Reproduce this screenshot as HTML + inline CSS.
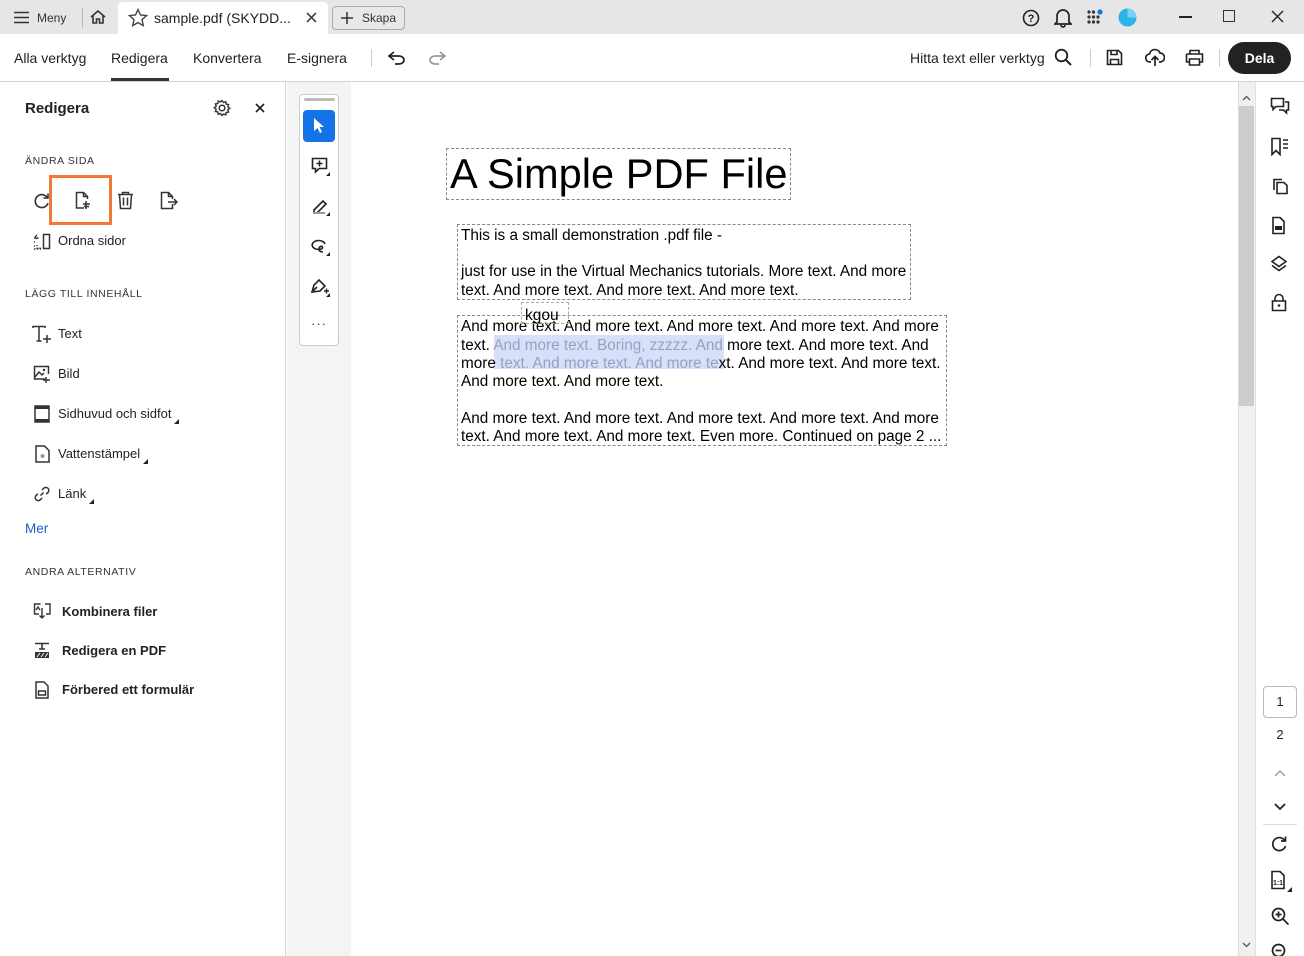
<!DOCTYPE html>
<html><head><meta charset="utf-8"><style>
*{box-sizing:border-box;margin:0;padding:0}
body{width:1304px;height:956px;overflow:hidden;font-family:"Liberation Sans",sans-serif;background:#fff;position:relative;color:#222}
.abs{position:absolute}
.tb{top:0;left:0;width:1304px;height:34px;background:#e6e6e6}
.sm{font-size:12px;color:#333}
.nav{top:34px;left:0;width:1304px;height:48px;border-bottom:1px solid #d0d0d0;background:#fff}
.nav span{position:absolute;top:16px;font-size:14px;color:#222}
.lp{top:82px;left:0;width:286px;height:874px;border-right:1px solid #d5d5d5;background:#fff}
.hd{font-size:10.5px;letter-spacing:.6px;color:#333;position:absolute;left:25px}
.it{position:absolute;left:58px;font-size:13px;color:#222}
.it2{position:absolute;left:62px;font-size:13px;font-weight:bold;color:#222}
.pdf{font-family:"Liberation Sans",Arial,sans-serif;color:#000}
.box{position:absolute;border:1px dashed #888}
.p{position:absolute;left:461px;font-size:15.3px;line-height:18px;white-space:nowrap}
.rr svg{position:absolute;left:1270px}
</style></head><body>
<div class="abs tb"></div>
<svg class="abs" style="left:14px;top:11px" width="16" height="13"><path d="M0 1.5h15M0 6.5h15M0 11.5h15" stroke="#333" stroke-width="1.6"/></svg>
<div class="abs sm" style="left:37px;top:11px">Meny</div>
<div class="abs" style="left:82px;top:8px;width:1px;height:20px;background:#bbb"></div>
<svg class="abs" style="left:89px;top:9px" width="18" height="16"><path d="M2 8L9 2l7 6M4 6.5V14h3.5v-4h3v4H14V6.5" fill="none" stroke="#333" stroke-width="1.6"/></svg>
<div class="abs" style="left:118px;top:2px;width:210px;height:32px;background:#fff;border-radius:4px 4px 0 0"></div>
<svg class="abs" style="left:128px;top:8px" width="20" height="19"><path d="M10 1.5l2.5 5.5 6 .6-4.5 4 1.3 6L10 14.6 4.7 17.6 6 11.6 1.5 7.6l6-.6z" fill="none" stroke="#444" stroke-width="1.4"/></svg>
<div class="abs" style="left:154px;top:10px;font-size:14px;color:#222">sample.pdf (SKYDD...</div>
<svg class="abs" style="left:306px;top:12px" width="11" height="11"><path d="M1 1l9 9M10 1l-9 9" stroke="#444" stroke-width="1.6"/></svg>
<div class="abs" style="left:332px;top:6px;width:73px;height:24px;border:1px solid #aaa;border-radius:4px;background:#e8e8e8"></div>
<svg class="abs" style="left:341px;top:12px" width="12" height="12"><path d="M6 0v12M0 6h12" stroke="#333" stroke-width="1.5"/></svg>
<div class="abs sm" style="left:362px;top:11px">Skapa</div>
<svg class="abs" style="left:1022px;top:9px" width="18" height="18"><circle cx="9" cy="9" r="7.5" fill="none" stroke="#222" stroke-width="1.6"/><text x="9" y="13" font-size="11" font-weight="bold" text-anchor="middle" font-family="Liberation Sans" fill="#222">?</text></svg>
<svg class="abs" style="left:1054px;top:8px" width="18" height="20"><path d="M3 14V8a6 6 0 0 1 12 0v6l2 2H1zM7 17a2 2 0 0 0 4 0" fill="none" stroke="#222" stroke-width="1.7"/></svg>
<svg class="abs" style="left:1087px;top:9px" width="18" height="16"><g fill="#333"><circle cx="2" cy="3" r="1.6"/><circle cx="6.5" cy="3" r="1.6"/><circle cx="2" cy="8" r="1.6"/><circle cx="6.5" cy="8" r="1.6"/><circle cx="11" cy="8" r="1.6"/><circle cx="2" cy="13" r="1.6"/><circle cx="6.5" cy="13" r="1.6"/><circle cx="11" cy="13" r="1.6"/></g><circle cx="13" cy="3" r="2.6" fill="#1473e6"/></svg>
<svg class="abs" style="left:1118px;top:8px" width="19" height="19"><circle cx="9.5" cy="9.5" r="9" fill="#2ab4e8"/><path d="M9.5 9.5V.5a9 9 0 0 1 9 9z" fill="#7ad3f3"/></svg>
<div class="abs" style="left:1179px;top:16px;width:13px;height:2px;background:#222"></div>
<div class="abs" style="left:1223px;top:10px;width:12px;height:12px;border:1.5px solid #333"></div>
<svg class="abs" style="left:1271px;top:10px" width="13" height="13"><path d="M1 1l11 11M12 1L1 12" stroke="#222" stroke-width="1.4"/></svg>
<div class="abs nav">
<span style="left:14px">Alla verktyg</span>
<span style="left:111px">Redigera</span>
<div class="abs" style="left:111px;top:44px;width:58px;height:3px;background:#333"></div>
<span style="left:193px">Konvertera</span>
<span style="left:287px">E-signera</span>
<div class="abs" style="left:371px;top:15px;width:1px;height:18px;background:#ccc"></div>
<svg class="abs" style="left:387px;top:16px" width="20" height="16"><path d="M7 2L2 6l5 4M2 6h10a5 4 0 0 1 0 8H8" fill="none" stroke="#222" stroke-width="1.7"/></svg>
<svg class="abs" style="left:427px;top:16px" width="20" height="16"><path d="M13 2l5 4-5 4M18 6H8a5 4 0 0 0 0 8h4" fill="none" stroke="#999" stroke-width="1.7"/></svg>
<span style="left:910px">Hitta text eller verktyg</span>
<svg class="abs" style="left:1054px;top:14px" width="18" height="18"><circle cx="7.5" cy="7.5" r="5.8" fill="none" stroke="#222" stroke-width="1.8"/><path d="M12 12l5 5" stroke="#222" stroke-width="2"/></svg>
<div class="abs" style="left:1090px;top:15px;width:1px;height:18px;background:#ccc"></div>
<svg class="abs" style="left:1106px;top:15px" width="17" height="17"><path d="M1.5 1.5h11l3 3v11h-14z M5 1.5v4h6v-4M4.5 15.5v-5h8v5" fill="none" stroke="#222" stroke-width="1.6"/></svg>
<svg class="abs" style="left:1145px;top:14px" width="20" height="19"><path d="M6 14H5a4 4 0 0 1-.5-8A5.5 5.5 0 0 1 15 5a4.5 4.5 0 0 1 0 9h-1M10 18V9M6.5 12L10 8.5l3.5 3.5" fill="none" stroke="#222" stroke-width="1.7"/></svg>
<svg class="abs" style="left:1185px;top:15px" width="19" height="17"><path d="M5 5V1.5h9V5M1.5 5h16v8h-3M4.5 13h-3V5M4.5 10h10v6h-10z" fill="none" stroke="#222" stroke-width="1.6"/></svg>
<div class="abs" style="left:1219px;top:15px;width:1px;height:18px;background:#ccc"></div>
<div class="abs" style="left:1228px;top:8px;width:63px;height:32px;border-radius:16px;background:#222;color:#fff;font-weight:bold;font-size:14px;text-align:center;line-height:32px">Dela</div>
</div>
<div class="abs lp">
<div class="abs" style="left:25px;top:18px;font-size:15px;font-weight:bold;color:#222">Redigera</div>
<svg class="abs" style="left:213px;top:17px" width="18" height="18"><circle cx="9" cy="9" r="2.8" fill="none" stroke="#333" stroke-width="1.5"/><path d="M9 1.5l1.5 2 2.3-.8.4 2.4 2.4.4-.8 2.3 2 1.5-2 1.5.8 2.3-2.4.4-.4 2.4-2.3-.8L9 16.5l-1.5-2-2.3.8-.4-2.4-2.4-.4.8-2.3-2-1.5 2-1.5-.8-2.3 2.4-.4.4-2.4 2.3.8z" fill="none" stroke="#333" stroke-width="1.4"/></svg>
<svg class="abs" style="left:255px;top:21px" width="10" height="10"><path d="M1 1l8 8M9 1L1 9" stroke="#222" stroke-width="1.7"/></svg>
<div class="hd" style="top:73px">ÄNDRA SIDA</div>
<svg class="abs" style="left:33px;top:110px" width="18" height="18"><path d="M14.5 6A6.5 6.5 0 1 0 15 11M15 1.5V6h-4.5" fill="none" stroke="#333" stroke-width="1.6"/></svg>
<div class="abs" style="left:49px;top:93px;width:63px;height:50px;border:3px solid #f0793a"></div>
<svg class="abs" style="left:75px;top:109px" width="18" height="19"><path d="M9 17H1.5V1.5h7l4 4V8M8.5 1.5v4h4" fill="none" stroke="#333" stroke-width="1.5"/><path d="M11 10v8M8 13h7M9 15.5h5" stroke="#333" stroke-width="1.5"/></svg>
<svg class="abs" style="left:117px;top:109px" width="17" height="19"><path d="M1 3.5h15M5.5 3.5V1.5h6v2M2.5 3.5l1 14h10l1-14M6.5 6.5v8M10.5 6.5v8" fill="none" stroke="#333" stroke-width="1.5"/></svg>
<svg class="abs" style="left:160px;top:109px" width="18" height="19"><path d="M12.5 13v4.5h-11V1.5h7l4 4V8M8.5 1.5v4h4M8 11h9M14 8l3 3-3 3" fill="none" stroke="#333" stroke-width="1.5"/></svg>
<svg class="abs" style="left:33px;top:151px" width="18" height="17"><path d="M10.5 1.5h6v14h-6z" fill="none" stroke="#333" stroke-width="1.5"/><path d="M1 5h6M1 9h1M1 13h1M1 16h7M4 16V12M7 16v-3" stroke="#333" stroke-width="1.5" stroke-dasharray="1.5 1.5"/><path d="M2 4l2-2M2 4l2 2" stroke="#333" stroke-width="1.3"/></svg>
<div class="it" style="top:151px">Ordna sidor</div>
<div class="hd" style="top:206px">LÄGG TILL INNEHÅLL</div>
<svg class="abs" style="left:32px;top:243px" width="20" height="20"><path d="M1 3V1.5h12V3M7 1.5V16M4.5 16h5M15 10v8M11 14h8" fill="none" stroke="#333" stroke-width="1.5"/></svg>
<div class="it" style="top:244px">Text</div>
<svg class="abs" style="left:33px;top:283px" width="20" height="18"><path d="M12 14H1.5V1.5h14V9M2 12l4-5 3 3 2-2M13 12v6M10 15h7" fill="none" stroke="#333" stroke-width="1.5"/><circle cx="11" cy="5" r="1.2" fill="#333"/></svg>
<div class="it" style="top:284px">Bild</div>
<svg class="abs" style="left:34px;top:323px" width="16" height="18"><rect x="1" y="1" width="14" height="16" fill="none" stroke="#333" stroke-width="1.5"/><path d="M1 1h14v3H1zM1 14h14v3H1z" fill="#333"/></svg>
<div class="it" style="top:324px">Sidhuvud och sidfot</div>
<svg class="abs" style="left:174px;top:337px" width="5" height="5"><path d="M5 0v5H0z" fill="#222"/></svg>
<svg class="abs" style="left:35px;top:363px" width="15" height="18"><path d="M1 1h8.5L14 5.5V17H1z" fill="none" stroke="#333" stroke-width="1.5"/><circle cx="7.5" cy="11" r="2" fill="#999"/></svg>
<div class="it" style="top:364px">Vattenstämpel</div>
<svg class="abs" style="left:143px;top:377px" width="5" height="5"><path d="M5 0v5H0z" fill="#222"/></svg>
<svg class="abs" style="left:33px;top:403px" width="18" height="18"><path d="M7.5 10.5l3-3M9 5l2-2a3 3 0 0 1 4.2 4.2l-2 2M9 13l-2 2A3 3 0 0 1 2.8 10.8l2-2" fill="none" stroke="#333" stroke-width="1.5"/></svg>
<div class="it" style="top:404px">Länk</div>
<svg class="abs" style="left:89px;top:417px" width="5" height="5"><path d="M5 0v5H0z" fill="#222"/></svg>
<div class="abs" style="left:25px;top:439px;font-size:13.5px;color:#1b5fc1">Mer</div>
<div class="hd" style="top:484px">ANDRA ALTERNATIV</div>
<svg class="abs" style="left:33px;top:520px" width="18" height="18"><path d="M6 12H1.5V2h6M12 2h5v10h-4M9 6v10M6.5 13.5L9 16l2.5-2.5M3 8l2-3 2 3" fill="none" stroke="#333" stroke-width="1.4"/></svg>
<div class="it2" style="top:522px">Kombinera filer</div>
<svg class="abs" style="left:34px;top:560px" width="16" height="17"><path d="M1 1.5h14M8 1.5V7M5 7h6" stroke="#333" stroke-width="1.6"/><rect x="1" y="10" width="14" height="6" fill="#333"/><path d="M3 15l3-4M7 15l3-4M11 15l3-4" stroke="#fff" stroke-width="1"/></svg>
<div class="it2" style="top:561px">Redigera en PDF</div>
<svg class="abs" style="left:35px;top:599px" width="14" height="18"><path d="M1 1h8l4 4v12H1zM3.5 10h7v4h-7z" fill="none" stroke="#333" stroke-width="1.5"/></svg>
<div class="it2" style="top:600px">Förbered ett formulär</div>
</div>
<div class="abs" style="left:287px;top:82px;width:64px;height:874px;background:#f4f4f4"></div>
<div class="abs" style="left:299px;top:94px;width:40px;height:252px;background:#fff;border:1px solid #ccc;border-radius:4px"></div>
<div class="abs" style="left:304px;top:98px;width:31px;height:3px;background:#bbb;border-radius:2px"></div>
<div class="abs" style="left:303px;top:110px;width:32px;height:32px;background:#1473e6;border-radius:4px"></div>
<svg class="abs" style="left:313px;top:117px" width="12" height="17"><path d="M1 1v13l3.5-3 2.5 5 2-1-2.5-5H11z" fill="#fff"/></svg>
<svg class="abs" style="left:311px;top:157px" width="20" height="20"><path d="M1.5 1.5h14v10H8l-3.5 3.5v-3.5h-3z" fill="none" stroke="#222" stroke-width="1.6"/><path d="M8.5 3.5v6M5.5 6.5h6" stroke="#222" stroke-width="1.5"/><path d="M19 15v4h-4z" fill="#222"/></svg>
<svg class="abs" style="left:311px;top:197px" width="20" height="20"><path d="M3 13l9-9 3 3-9 9H3z" fill="none" stroke="#222" stroke-width="1.6"/><path d="M2 16h12" stroke="#999" stroke-width="2"/><path d="M19 15v4h-4z" fill="#222"/></svg>
<svg class="abs" style="left:311px;top:237px" width="20" height="20"><path d="M14 7a6.5 4.5 0 1 0-6 5.5c2 0 4-1 3.5-2.5S8 9.5 8 12s2 3 4 3" fill="none" stroke="#222" stroke-width="1.6"/><path d="M19 15v4h-4z" fill="#222"/></svg>
<svg class="abs" style="left:310px;top:277px" width="21" height="20"><path d="M2 15l2-7 5-5 6 6-5 5zM2 15l5-5" fill="none" stroke="#222" stroke-width="1.6"/><path d="M14 14h5M16.5 11.5v5" stroke="#222" stroke-width="1.4"/><path d="M20 16v4h-4z" fill="#222"/></svg>
<div class="abs" style="left:311px;top:316px;font-size:13px;color:#333;letter-spacing:1px">···</div>
<div class="abs" style="left:351px;top:82px;width:887px;height:874px;background:#fff"></div>
<div class="box" style="left:446px;top:148px;width:345px;height:52px"></div>
<div class="abs pdf" style="left:450px;top:150px;font-size:41.6px;line-height:48px;white-space:nowrap">A Simple PDF File</div>
<div class="box" style="left:457px;top:224px;width:454px;height:76px"></div>
<div class="pdf p" style="top:227px">This is a small demonstration .pdf file -</div>
<div class="pdf p" style="top:263px">just for use in the Virtual Mechanics tutorials. More text. And more</div>
<div class="pdf p" style="top:282px">text. And more text. And more text. And more text.</div>
<div class="box" style="left:457px;top:315px;width:490px;height:131px"></div>
<div class="abs" style="left:494px;top:335px;width:230px;height:34px;background:#d8dff8"></div>
<div class="pdf p" style="top:318px">And more text. And more text. And more text. And more text. And more</div>
<div class="pdf p" style="top:337px">text. <span style="color:#9aa0c0">And more text. Boring, zzzzz. And</span> more text. And more text. And</div>
<div class="pdf p" style="top:355px">more <span style="color:#9aa0c0">text. And more text. And more te</span>xt. And more text. And more text.</div>
<div class="pdf p" style="top:373px">And more text. And more text.</div>
<div class="pdf p" style="top:410px">And more text. And more text. And more text. And more text. And more</div>
<div class="pdf p" style="top:428px">text. And more text. And more text. Even more. Continued on page 2 ...</div>
<div class="box" style="left:521px;top:302px;width:48px;height:22px;border-color:#aaa;background:transparent"></div>
<div class="abs pdf" style="left:525px;top:307px;font-size:15.5px">kgou</div>
<div class="abs" style="left:1238px;top:82px;width:17px;height:874px;background:#f0f0f0;border-left:1px solid #ddd"></div>
<div class="abs" style="left:1239px;top:106px;width:15px;height:300px;background:#cdcdcd"></div>
<svg class="abs" style="left:1242px;top:95px" width="9" height="6"><path d="M1 5l3.5-3.5L8 5" fill="none" stroke="#555" stroke-width="1.3"/></svg>
<svg class="abs" style="left:1242px;top:942px" width="9" height="6"><path d="M1 1l3.5 3.5L8 1" fill="none" stroke="#555" stroke-width="1.3"/></svg>
<div class="abs" style="left:1255px;top:82px;width:49px;height:874px;background:#fff;border-left:1px solid #e0e0e0"></div>
<div class="rr">
<svg style="top:97px" width="20" height="19"><path d="M1.5 1.5h12v8H6l-3 3v-3H1.5zM15 5h3.5v8h-2v3l-3-3H9" fill="none" stroke="#222" stroke-width="1.6"/></svg>
<svg style="top:137px" width="20" height="19"><path d="M2 1.5h8v16l-4-4-4 4z" fill="none" stroke="#222" stroke-width="1.6"/><path d="M13 3h5M13 7h5M13 11h5" stroke="#222" stroke-width="1.4"/></svg>
<svg style="top:176px" width="20" height="19"><path d="M4 14V3.5h8M7 6.5h7l3 3v8H7z" fill="none" stroke="#222" stroke-width="1.6"/></svg>
<svg style="top:216px" width="20" height="19"><path d="M3 1.5h7l4 4v12H3z" fill="none" stroke="#222" stroke-width="1.6"/><rect x="5" y="10" width="7" height="4" fill="#222"/></svg>
<svg style="top:255px" width="20" height="19"><path d="M9 1.5l7 5-7 5-7-5zM2 10.5l7 5 7-5" fill="none" stroke="#222" stroke-width="1.6"/></svg>
<svg style="top:293px" width="20" height="19"><path d="M5 8V5.5a4 4 0 0 1 8 0V8M2.5 8h13v9.5h-13z" fill="none" stroke="#222" stroke-width="1.6"/><circle cx="9" cy="12.5" r="1.3" fill="#222"/></svg>
</div>
<div class="abs" style="left:1263px;top:686px;width:34px;height:32px;border:1px solid #bbb;border-radius:4px;text-align:center;line-height:30px;font-size:13px">1</div>
<div class="abs" style="left:1263px;top:727px;width:34px;text-align:center;font-size:13px">2</div>
<svg class="abs" style="left:1274px;top:769px" width="12" height="8"><path d="M1 7l5-5 5 5" fill="none" stroke="#aaa" stroke-width="1.6"/></svg>
<svg class="abs" style="left:1274px;top:803px" width="12" height="8"><path d="M1 1l5 5 5-5" fill="none" stroke="#222" stroke-width="1.8"/></svg>
<div class="abs" style="left:1263px;top:824px;width:34px;height:1px;background:#ddd"></div>
<svg class="abs" style="left:1270px;top:835px" width="20" height="19"><path d="M15 6A6.5 6.5 0 1 0 15.5 11M15.5 1.5V6H11" fill="none" stroke="#222" stroke-width="1.7"/></svg>
<svg class="abs" style="left:1270px;top:870px" width="22" height="22"><path d="M2 1.5h8l4 4v13H2z" fill="none" stroke="#222" stroke-width="1.6"/><text x="8" y="15" font-size="7" font-weight="bold" text-anchor="middle" font-family="Liberation Sans" fill="#222">1:1</text><path d="M22 17v5h-5z" fill="#222"/></svg>
<svg class="abs" style="left:1271px;top:907px" width="19" height="19"><circle cx="7.5" cy="7.5" r="6" fill="none" stroke="#222" stroke-width="1.7"/><path d="M12 12l5.5 5.5M7.5 4.5v6M4.5 7.5h6" stroke="#222" stroke-width="1.7"/></svg>
<svg class="abs" style="left:1271px;top:943px" width="19" height="13"><circle cx="7.5" cy="7.5" r="6" fill="none" stroke="#222" stroke-width="1.7"/><path d="M4.5 7.5h6" stroke="#222" stroke-width="1.7"/></svg>
</body></html>
